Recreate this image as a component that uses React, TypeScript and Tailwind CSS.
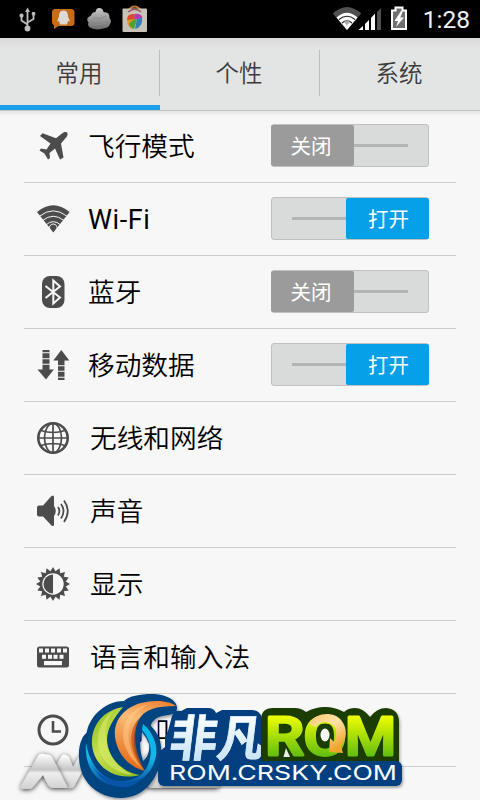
import { useState } from 'react'
import type { ReactNode } from 'react'

type SettingItem = {
  id: string
  label: string
  icon: ReactNode
  toggle?: boolean
}

const TABS = ['常用', '个性', '系统']
const ICON_COLOR = '#4c4c4c'

// 16-point star used for the brightness icon
const SUN_POINTS = Array.from({ length: 32 }, (_, i) => {
  const r = i % 2 === 0 ? 17 : 13
  const a = (i * Math.PI) / 16
  return `${(18 + r * Math.sin(a)).toFixed(2)},${(18 - r * Math.cos(a)).toFixed(2)}`
}).join(' ')

function Icon({ children }: { children: ReactNode }) {
  return (
    <svg width="36" height="36" viewBox="0 0 36 36" fill={ICON_COLOR} className="block shrink-0">
      {children}
    </svg>
  )
}

const ITEMS: SettingItem[] = [
  {
    id: 'airplane',
    label: '飞行模式',
    toggle: false,
    icon: (
      <Icon>
        <path d="M32 4.500C30.500 3.500 28.500 4.200 27 5.500L21 10.200L7.500 5.200L5 8L15.500 15.500L11.500 21.500L6 20.500L4.500 22.500L9.500 25.500L13 31.500L15 30L14.500 25L20 20.500L25 31.500L28.500 29.500L26 15.500L31.500 9C32.800 7.500 33 5.500 32 4.500Z" />
      </Icon>
    ),
  },
  {
    id: 'wifi',
    label: 'Wi-Fi',
    toggle: true,
    icon: (
      <Icon>
        <path d="M18.300 31.500L2 11Q18.300 -2.500 34.600 11Z" />
        <g fill="none" stroke="#f7f7f7" strokeWidth="1">
          <path d="M4.500 15.200Q18.300 4.500 32 15.200" />
          <path d="M7.500 19.500Q18.300 11 29 19.500" />
          <path d="M11 23.800Q18.300 17.500 25.500 23.800" />
          <path d="M14.500 28A3.900 3.900 0 1 1 22 28" />
        </g>
      </Icon>
    ),
  },
  {
    id: 'bluetooth',
    label: '蓝牙',
    toggle: false,
    icon: (
      <Icon>
        <rect x="7" y="2" width="22.500" height="32" rx="8" />
        <path d="M10.500 12L25 23.500L18.300 29.500V6.500L25 12.500L10.500 24" fill="none" stroke="#f7f7f7" strokeWidth="2" />
      </Icon>
    ),
  },
  {
    id: 'data',
    label: '移动数据',
    toggle: true,
    icon: (
      <Icon>
        <path d="M7.500 3h7v2.300h-7zM7.500 6.300h7v4.900h-7zM7.500 12.200h7v4.600h-7zM7.500 17.800h7v4.700h4.300L11 32.500L2.500 22.500h5z" />
        <path d="M23 33h6.500v-2.300H23zM23 29.700h6.500v-4.900H23zM23 23.800h6.500v-4.600H23zM23 18.200h6.500v-4.700h4.800L26.300 3L18.300 13.500H23z" />
      </Icon>
    ),
  },
  {
    id: 'network',
    label: '无线和网络',
    icon: (
      <Icon>
        <g fill="none" stroke={ICON_COLOR} strokeWidth="1.700">
          <circle cx="18" cy="18" r="14.700" strokeWidth="2.600" />
          <ellipse cx="18" cy="18" rx="8.500" ry="14.700" />
          <path d="M18 3v30M3 18h30M6 10.500Q18 14.500 30 10.500M6 25.500Q18 21.500 30 25.500" />
        </g>
      </Icon>
    ),
  },
  {
    id: 'sound',
    label: '声音',
    icon: (
      <Icon>
        <path d="M2 14.500Q2 12.500 4 12.500H8L16.500 3Q19 1.500 19 4V13Q22.500 18 19 23V31.500Q19 34 16.500 32.500L8 23.500H4Q2 23.500 2 21.500Z" />
        <g fill="none" stroke={ICON_COLOR} strokeWidth="1.800">
          <path d="M23 14Q25.800 18 23 22.500" />
          <path d="M26 11Q31 18 26 25.500" />
          <path d="M29 7.500Q36.500 18 29 29" />
        </g>
      </Icon>
    ),
  },
  {
    id: 'display',
    label: '显示',
    icon: (
      <Icon>
        <polygon points={SUN_POINTS} />
        <circle cx="18" cy="18" r="10.700" fill="#f7f7f7" />
        <path d="M18 8.500A9.500 9.500 0 0 0 18 27.500Z" />
      </Icon>
    ),
  },
  {
    id: 'language',
    label: '语言和输入法',
    icon: (
      <Icon>
        <rect x="2" y="7.500" width="32" height="21" rx="2.500" />
        <g fill="#f7f7f7">
          {[4, 10, 16, 22, 28].map((x) => (
            <rect key={x} x={x} y="9.500" width="4" height="4" />
          ))}
          {[7, 13, 18.5, 24.5].map((x) => (
            <rect key={x} x={x} y="15.800" width="4" height="4" />
          ))}
          <rect x="9" y="22" width="18" height="4.200" />
        </g>
      </Icon>
    ),
  },
  {
    id: 'date',
    label: '日期和时间',
    icon: (
      <Icon>
        <g fill="none" stroke={ICON_COLOR} strokeWidth="3">
          <circle cx="18" cy="18" r="14" />
          <path d="M18 9V19.500H26" strokeWidth="2.600" />
        </g>
      </Icon>
    ),
  },
]

function StatusBar() {
  return (
    <div className="flex h-[38px] items-center bg-black">
      <svg width="160" height="38" viewBox="0 0 160 38" className="block shrink-0">
        <defs>
          <linearGradient id="cloud" x1="0" y1="0" x2="0" y2="1">
            <stop offset="0" stopColor="#c8c8c8" />
            <stop offset="1" stopColor="#6c6c6c" />
          </linearGradient>
        </defs>
        {/* usb */}
        <g stroke="#bdbdbd" fill="none" strokeWidth="1.800">
          <path d="M27.500 28V11M27.500 24.500L21.500 20.500V15.500M27.500 22.500L33.500 19V14.500" />
          <circle cx="27.500" cy="28.500" r="2" fill="#bdbdbd" />
          <circle cx="21.500" cy="15.500" r="1.200" fill="#bdbdbd" />
          <path d="M32.300 12.500h2.500v2.500h-2.500z" fill="#bdbdbd" strokeWidth="1" />
        </g>
        <path d="M27.500 7.500L30 12H25Z" fill="#bdbdbd" />
        {/* penguin chat */}
        <path d="M55 9h16q3.500 0 3.500 3.500v10q0 3.500-3.500 3.500H58.500L54 29v-3.500q-2-1-2-3.500V12.500Q52 9 55 9Z" fill="#c56c14" />
        <path d="M63.500 10.500C67 10.500 68 13.500 68 16.500L70 21.500L68 21L67 24.500H60L59 21L57 21.500L59 16.500C59 13.500 60 10.500 63.500 10.500Z" fill="#ddd9d4" />
        {/* cloud */}
        <path d="M99 8Q103 8 103.500 12Q110 12 109.500 18Q112 21 110 24Q109 28 103 28.500Q96 30.500 91 28Q87 26 88.500 22.500Q85 18 91 15.500Q92 12 95.500 12Q96 8 99 8Z" fill="url(#cloud)" />
        <path d="M94 18Q100 20 106 16M91 23.500Q99 26 108 22" stroke="#8a8a8a" strokeWidth="1" fill="none" />
        {/* app store bag */}
        <path d="M128 11Q134 2 142 11" stroke="#b8743c" strokeWidth="2" fill="none" />
        <rect x="122.500" y="8.500" width="24.500" height="23.500" rx="1" fill="#c9c2b6" />
        <path d="M128 12Q135 6.500 141 12" stroke="#9b5560" strokeWidth="1.500" fill="none" />
        <path d="M127 20Q127 13 134.500 14L134 20Z" fill="#d94a2b" />
        <path d="M134.500 14Q141 13 142.500 18L134 20Z" fill="#b03cae" />
        <path d="M127 20L135 19L133 29Q127 27 127 20Z" fill="#e59a23" />
        <path d="M129 24Q133 18 137 20L134 29Q130 28 129 24Z" fill="#4da333" />
        <path d="M137 19L142 18Q143 27 135 29Z" fill="#337fb7" />
      </svg>
      <svg width="80" height="38" viewBox="330 0 80 38" className="ml-auto block shrink-0">
        <path d="M347 30L332.800 13.500Q347 0.500 361.200 13.500Z" fill="#505050" />
        <path d="M347 30L336.500 17.500Q347 8 357.500 17.500Z" fill="#fff" />
        <g fill="none" stroke="#222" strokeWidth="1.100">
          <path d="M339 19.500Q347 13 355 19.500" />
          <path d="M342 23Q347 18.500 352 23" />
        </g>
        <path d="M344 22Q347 19.500 350 22L347 25.500Z" fill="#aaa" />
        <path d="M358.500 30L363 26V30ZM365 24L369 20V30H365ZM371 18L375 13.500V30H371Z" fill="#fff" />
        <path d="M377 12L381 8V30H377Z" fill="#505050" />
        <path d="M392 10.500h3.500v-3h7v3h3.500v18.500h-14z" fill="#6f6f6f" stroke="#fff" strokeWidth="2" />
        <path d="M401 11L394.500 21H398L396 27L404 17.500H400.300L403 11Z" fill="#fff" />
      </svg>
      <span className="w-[70px] pr-[10px] pt-[2px] text-right text-[24.5px] leading-none text-[#f2f2f2]">1:28</span>
    </div>
  )
}

function Toggle({ on, onChange }: { on: boolean; onChange: () => void }) {
  return (
    <button
      onClick={onChange}
      className={`mb-[2px] flex h-[43px] w-[158px] items-center rounded-[3px] border border-[#bfc1c0] bg-[#d9dbda] ${on ? 'flex-row-reverse' : ''}`}
    >
      <span
        className={`flex h-[41px] w-[83px] shrink-0 items-center rounded-[2px] text-[20.5px] leading-none text-white ${
          on ? '-mr-px justify-center bg-[#05a0e8] pl-[2px]' : '-ml-px justify-center bg-[#9b9b9b] pr-[3px]'
        }`}
      >
        <span className="pt-[5px]">{on ? '打开' : '关闭'}</span>
      </span>
      <span className="h-[3px] w-[54px] bg-[#b3b5b4]" />
    </button>
  )
}

function Logo() {
  return (
    <svg width="480" height="120" viewBox="0 680 480 120" className="pointer-events-none absolute bottom-0 left-0">
      <defs>
        <linearGradient id="green" x1="0" y1="0" x2="1" y2="1">
          <stop offset="0" stopColor="#7fb51c" />
          <stop offset="0.400" stopColor="#c9e04d" />
          <stop offset="1" stopColor="#85b51a" />
        </linearGradient>
        <linearGradient id="orange" x1="0.800" y1="0" x2="0.500" y2="1">
          <stop offset="0" stopColor="#f08232" />
          <stop offset="0.350" stopColor="#fbbd77" />
          <stop offset="1" stopColor="#e66e1c" />
        </linearGradient>
        <linearGradient id="ring" x1="0" y1="0" x2="0" y2="1">
          <stop offset="0" stopColor="#08b4e4" />
          <stop offset="0.550" stopColor="#16b5e8" />
          <stop offset="1" stopColor="#0a4da2" />
        </linearGradient>
        <linearGradient id="ice" x1="0" y1="0" x2="0" y2="1">
          <stop offset="0.200" stopColor="#ffffff" />
          <stop offset="1" stopColor="#b9def5" />
        </linearGradient>
        <linearGradient id="lime" gradientUnits="userSpaceOnUse" x1="0" y1="715" x2="0" y2="757">
          <stop offset="0" stopColor="#f2ff00" />
          <stop offset="1" stopColor="#5fbd10" />
        </linearGradient>
        <linearGradient id="gold" x1="0" y1="0" x2="0.500" y2="1">
          <stop offset="0" stopColor="#f7c46d" />
          <stop offset="0.450" stopColor="#ffe2a6" />
          <stop offset="1" stopColor="#f0a52c" />
        </linearGradient>
        <linearGradient id="steel" x1="0" y1="0" x2="0" y2="1">
          <stop offset="0" stopColor="#ffffff" />
          <stop offset="0.450" stopColor="#c6c6c6" />
          <stop offset="0.550" stopColor="#eeeeee" />
          <stop offset="1" stopColor="#d0d0d0" />
        </linearGradient>
        <filter id="shade" x="-20%" y="-30%" width="140%" height="160%">
          <feDropShadow dx="0" dy="1" stdDeviation="2.500" floodColor="#000" floodOpacity="0.800" />
        </filter>
        <filter id="soft">
          <feDropShadow dx="1" dy="2" stdDeviation="1.500" floodColor="#000" floodOpacity="0.350" />
        </filter>
      </defs>

      {/* steel mark */}
      <g fill="url(#steel)">
        <path
          filter="url(#shade)"
          d="M61 757Q62 754 66 755L69 757L73 767L79 757Q80 756 83 756H90L75 785Q73 789 68 788L62 777L55 767Z"
        />
        <path
          filter="url(#shade)"
          d="M21 786L38 756Q40 753 44 754L49 755Q51 755 52 757L68 788H53Q50 788 48 785L43 775L34 786Q32 789 28 789H23Q20 789 21 786Z"
        />
        <path filter="url(#shade)" d="M132 776L148 754L158 758L168 776L212 780L220 783L218 788H150Z" />
      </g>
      <path d="M143 723L158 716V721H157.500V743H143Z" fill="#f1f2f3" />

      {/* crescent backing */}
      <g filter="url(#soft)">
        <path
          fillRule="evenodd"
          d="M124 701C129 696 140 694 152 694C165 694 178 700 177 709C176 716 168 714 159 717C154 719 151 723 151 726C158 733 162 742 161 752C161 765 157 776 150 784C143 793 132 798 121 798C106 798 92 791 85 779C78 768 77 748 82 739C84 734 87 734 87 731C91 714 107 701 124 701ZM142 732C139 742 140 751 143 761C148 757 150 750 149 744Q147 738 142 732Z"
          fill="#064580"
        />
      </g>
      <path
        d="M86 743C84 767 97 786 120 786C143 786 159 766 156 746C154 735 148 728 143 724L142 730C151 740 153 753 148 765C143 777 131 782 117 781C101 778 90 765 86 743Z"
        fill="url(#ring)"
      />
      <path d="M93 766C103 783 131 786 142 777C132 793 105 791 93 766Z" fill="#0754a8" />
      <path d="M123 707C104 710 91 725 92 744C93 764 112 782 140 775C121 772 108 757 107 740C107 727 115 717 123 707Z" fill="url(#green)" />
      <path d="M113 711C99 731 104 762 133 775C114 774 97 759 98 739C98 728 104 718 113 711Z" fill="#d6e969" opacity="0.650" />
      <path
        d="M176 706C168 700 153 700 141 703C122 708 111 724 116 742C120 758 132 768 145 771C132 754 131 737 138 721C144 709 157 706 176 706Z"
        fill="url(#orange)"
      />
      <path d="M149 704C130 712 124 733 132 752Q136 762 143 769C125 756 119 737 126 721Q134 707 149 704Z" fill="#ffc98b" opacity="0.550" />
      <path d="M139 718C127 732 129 751 144 770C135 751 132 737 139 718Z" fill="#c94f0d" opacity="0.750" />

      {/* brand name */}
      <path
        d="M159 764V752L165 747V737L168 731L172 716Q174 710 181 711L187 708H208Q214 708 216 713L222 710H252Q260 710 262 718L264 764Z"
        fill="#053f80"
      />
      <text
        transform="translate(168 756) skewX(-7)"
        fontFamily="'Noto Sans CJK SC', sans-serif"
        fontWeight="700"
        fontSize="49"
        fill="url(#ice)"
        stroke="#e4f3fc"
        strokeWidth="0.800"
        textLength="95"
        lengthAdjust="spacingAndGlyphs"
      >
        非凡
      </text>

      <path
        d="M273 708H295Q301 708 306 712Q325 702 344 712Q348 708 355 708Q363 708 370 717Q377 708 386 708Q399 709 399 722V764H261V720Q261 708 273 708Z"
        fill="#1c3d02"
        filter="url(#soft)"
      />
      <path d="M283.500 757L286 748L290 757Z" fill="#e9eee6" />
      <g
        fontFamily="Roboto, sans-serif"
        fontWeight="500"
        fontSize="54"
        fill="url(#lime)"
        stroke="url(#lime)"
        strokeWidth="3"
        strokeLinejoin="round"
      >
        <text x="265" y="754.500" textLength="39" lengthAdjust="spacingAndGlyphs">R</text>
        <text x="303.500" y="754.500" textLength="43" lengthAdjust="spacingAndGlyphs">O</text>
        <text x="345" y="754.500" textLength="51" lengthAdjust="spacingAndGlyphs">M</text>
      </g>
      <ellipse cx="325" cy="735" rx="8" ry="11" fill="#1c3d02" />
      <ellipse cx="325" cy="735" rx="4.500" ry="6.500" fill="#f7f7f7" />
      <path
        d="M309 724C315 712 334 711 341 720C348 728 347 740 341 746L343 753L329 752L330 738L334 742C338 735 337 726 330 723C323 720 317 724 316 727Z"
        fill="url(#gold)"
      />

      {/* address plate */}
      <rect x="158" y="761" width="244" height="25" rx="6" fill="#053f80" filter="url(#soft)" />
      <text
        x="169"
        y="780"
        fontFamily="Inter, sans-serif"
        fontSize="20"
        fontWeight="400"
        fill="#fff"
        textLength="228"
        lengthAdjust="spacingAndGlyphs"
      >
        ROM.CRSKY.COM
      </text>
    </svg>
  )
}

export default function App() {
  const [activeTab, setActiveTab] = useState(0)
  const [toggles, setToggles] = useState<Record<string, boolean>>(() =>
    Object.fromEntries(ITEMS.filter((i) => i.toggle !== undefined).map((i) => [i.id, !!i.toggle])),
  )

  return (
    <div className="relative h-[800px] w-[480px] overflow-hidden bg-[#f7f7f7] font-[Roboto,'Noto_Sans_CJK_SC',sans-serif] text-black select-none">
      <StatusBar />

      <div className="flex h-[72px] bg-linear-to-b from-[#d8d9d8] via-[#e3e5e4] via-15% to-[#e3e5e4]">
        {TABS.map((tab, i) => (
          <button
            key={tab}
            onClick={() => setActiveTab(i)}
            className={`flex h-full w-[160px] flex-col border-b-[5px] ${i === activeTab ? 'border-[#1b9fe8]' : 'border-transparent'}`}
          >
            <span
              className={`mt-3 flex h-[46px] w-full items-center justify-center border-r pt-[4px] pr-[1px] text-[23.5px] leading-none font-[350] text-[#3b3b3b] ${
                i < TABS.length - 1 ? 'border-[#bcbebd]' : 'border-transparent'
              }`}
            >
              {tab}
            </span>
          </button>
        ))}
      </div>
      <div className="h-[6px] bg-linear-to-b from-[#b4b5b5] via-[#e6e6e6] via-25% to-[#f7f7f7]" />

      <div className="-mt-[6px] px-6">
        {ITEMS.map((item) => (
          <div key={item.id} className="flex h-[73px] items-center border-b border-[#cccccc] pr-[27px] pl-[11px]">
            {item.icon}
            <span
              className={`flex-1 leading-none ${item.toggle === undefined ? 'pl-[19px]' : 'pl-[17px]'} ${
                item.id === 'wifi' ? 'pt-[3px] text-[27px] tracking-[0.6px]' : 'pt-[2px] text-[26.7px] font-[350]'
              }`}
            >
              {item.label}
            </span>
            {item.toggle !== undefined && (
              <Toggle
                on={toggles[item.id]}
                onChange={() => setToggles((prev) => ({ ...prev, [item.id]: !prev[item.id] }))}
              />
            )}
          </div>
        ))}
      </div>

      <Logo />
    </div>
  )
}
